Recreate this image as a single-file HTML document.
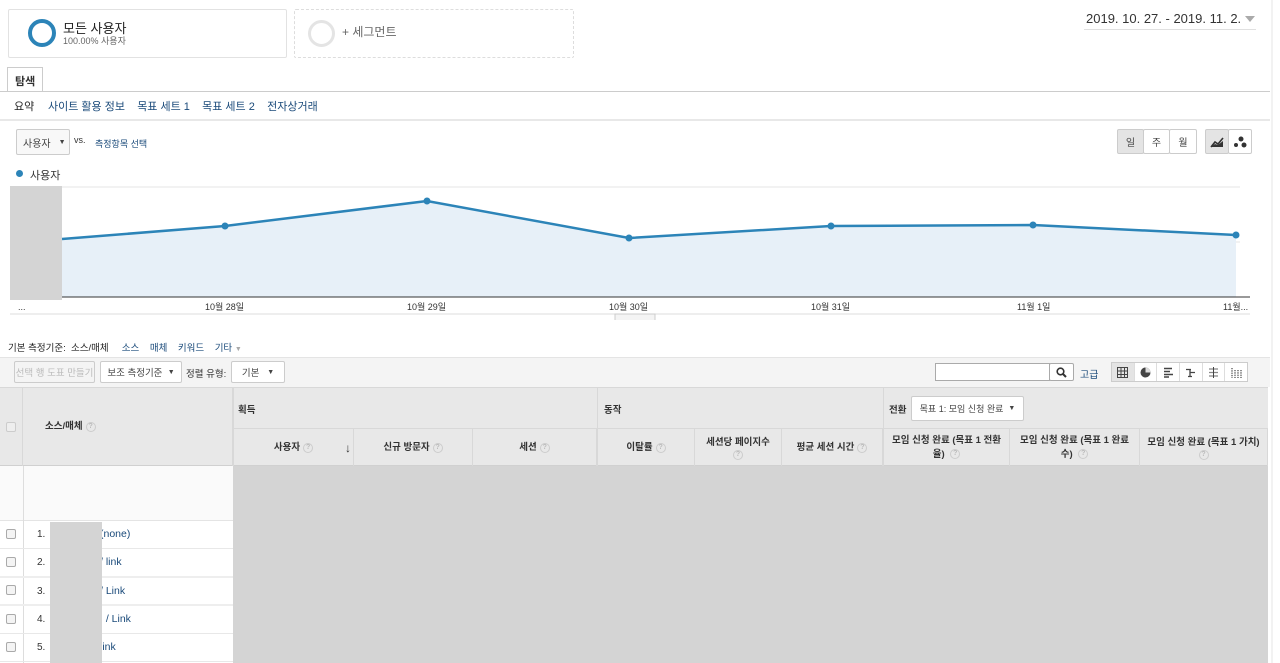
<!DOCTYPE html>
<html><head><meta charset="utf-8"><style>
*{box-sizing:border-box;margin:0;padding:0}
body{width:1280px;height:663px;overflow:hidden;background:#fff;font-family:"Liberation Sans","Noto Sans CJK KR",sans-serif;font-size:11px;color:#333;position:relative}
.a{position:absolute}
a{color:#1a4a7a;text-decoration:none}
.btn{position:absolute;border:1px solid #ccc;border-radius:2px;background:#f8f8f8;font-size:10px;color:#444;display:flex;align-items:center;justify-content:center}
.q{display:inline-block;width:10px;height:10px;border-radius:50%;border:1px solid #ccc;color:#bbb;font-size:7px;line-height:8px;text-align:center;vertical-align:middle;margin-left:3px}
.th{position:absolute;font-size:9.5px;color:#333;display:flex;align-items:center;justify-content:center;text-align:center;border-right:1px solid #d8d8d8;line-height:14px}
.ln{position:absolute;background:#ddd}
.cb{position:absolute;width:10px;height:10px;border:1px solid #aaa;border-radius:2px;background:#f4f4f4}
.ic{border-right:1px solid #ddd;text-align:center;line-height:18px;display:flex;align-items:center;justify-content:center}
</style></head><body>
<div class="a" style="left:8px;top:9px;width:279px;height:49px;border:1px solid #e2e2e2;border-radius:2px"></div>
<div class="a" style="left:28px;top:19px;width:28px;height:28px;border:4px solid #2c84b8;border-radius:50%"></div>
<div class="a" style="left:63px;top:18px;font-size:13px;color:#222">모든 사용자</div>
<div class="a" style="left:63px;top:34px;font-size:9px;color:#666">100.00% 사용자</div>
<div class="a" style="left:294px;top:9px;width:280px;height:49px;border:1px dashed #ddd;border-radius:2px"></div>
<div class="a" style="left:308px;top:20px;width:27px;height:27px;border:3px solid #e4e4e4;border-radius:50%"></div>
<div class="a" style="left:342px;top:23px;font-size:12px;color:#666">+ 세그먼트</div>
<div class="a" style="left:1086px;top:11px;font-size:13px;color:#333">2019. 10. 27. - 2019. 11. 2.</div>
<div class="a" style="left:1245px;top:16px;border:5px solid transparent;border-top:6px solid #aaa"></div>
<div class="a" style="left:1084px;top:29px;width:172px;height:1px;background:#e0e0e0"></div>
<div class="a" style="left:1271px;top:0;width:2px;height:663px;background:#f2f2f2"></div>
<div class="a" style="left:7px;top:67px;width:36px;height:25px;border:1px solid #ccc;border-bottom:none;background:#fff;font-weight:bold;font-size:11px;padding:5px 0 0 7px">탐색</div>
<div class="ln" style="left:0;top:91px;width:1270px;height:1px;background:#ccc"></div>
<div class="a" style="left:14px;top:98px;font-size:11px;color:#222">요약</div>
<div class="a" style="left:48px;top:98px;font-size:11px"><a>사이트 활용 정보</a>&nbsp;&nbsp;&nbsp;&nbsp;<a>목표 세트 1</a>&nbsp;&nbsp;&nbsp;&nbsp;<a>목표 세트 2</a>&nbsp;&nbsp;&nbsp;&nbsp;<a>전자상거래</a></div>
<div class="ln" style="left:0;top:119px;width:1270px;height:2px;background:#e8e8e8"></div>
<div class="btn" style="left:16px;top:129px;width:54px;height:26px;justify-content:flex-start;padding-left:6px">사용자 <span style="margin-left:8px;font-size:7px">▼</span></div>
<div class="a" style="left:74px;top:135px;font-size:9px">vs.</div>
<div class="a" style="left:95px;top:137px;font-size:9px"><a>측정항목 선택</a></div>
<div class="btn" style="left:1117px;top:129px;width:27px;height:25px;background:#e4e4e4">일</div>
<div class="btn" style="left:1143px;top:129px;width:27px;height:25px;background:#fff">주</div>
<div class="btn" style="left:1169px;top:129px;width:28px;height:25px;background:#fff">월</div>
<div class="btn" style="left:1205px;top:129px;width:24px;height:25px;background:#e4e4e4"><svg width="14" height="12"><path d="M1 11 L5 6 L8 8 L13 2" stroke="#333" stroke-width="1.6" fill="none"/><path d="M1 11 L5 8 L8 9 L13 5 V11Z" fill="#333"/></svg></div>
<div class="btn" style="left:1228px;top:129px;width:24px;height:25px;background:#fff"><svg width="14" height="12"><circle cx="8" cy="3" r="2.5" fill="#333"/><circle cx="3" cy="9" r="2" fill="#333"/><circle cx="11" cy="9" r="2.5" fill="#333"/></svg></div>
<div class="a" style="left:16px;top:170px;width:7px;height:7px;border-radius:50%;background:#2c84b8"></div>
<div class="a" style="left:30px;top:167px;font-size:11px;color:#333">사용자</div>
<svg class="a" style="left:0;top:180px" width="1270" height="140">
<line x1="62" y1="7" x2="1240" y2="7" stroke="#e6e6e6"/>
<line x1="62" y1="62" x2="1240" y2="62" stroke="#e6e6e6"/>
<path d="M62 59 L225 46 L427 21 L629 58 L831 46 L1033 45 L1236 55 V117 H62Z" fill="#e7f0f8"/>
<path d="M62 59 L225 46 L427 21 L629 58 L831 46 L1033 45 L1236 55" stroke="#2c84b8" stroke-width="2.5" fill="none"/>
<g fill="#2c84b8"><circle cx="225" cy="46" r="3.5"/><circle cx="427" cy="21" r="3.5"/><circle cx="629" cy="58" r="3.5"/><circle cx="831" cy="46" r="3.5"/><circle cx="1033" cy="45" r="3.5"/><circle cx="1236" cy="55" r="3.5"/></g>
<line x1="10" y1="117" x2="1250" y2="117" stroke="#333"/>
<line x1="10" y1="134" x2="1250" y2="134" stroke="#ddd"/>
<rect x="10" y="6" width="52" height="114" fill="#d4d4d4"/>
<rect x="615" y="134" width="40" height="7" fill="#f4f4f4" stroke="#ccc"/>
</svg>
<div class="a" style="left:18px;top:302px;font-size:9px">...</div>
<div class="a" style="left:205px;top:300px;font-size:9px">10월 28일</div>
<div class="a" style="left:407px;top:300px;font-size:9px">10월 29일</div>
<div class="a" style="left:609px;top:300px;font-size:9px">10월 30일</div>
<div class="a" style="left:811px;top:300px;font-size:9px">10월 31일</div>
<div class="a" style="left:1017px;top:300px;font-size:9px">11월 1일</div>
<div class="a" style="left:1223px;top:300px;font-size:9px">11월...</div>
<div class="a" style="left:8px;top:340px;font-size:9.5px;color:#222">기본 측정기준:&nbsp; 소스/매체 &nbsp;&nbsp;&nbsp;&nbsp;<a>소스</a>&nbsp;&nbsp;&nbsp;&nbsp;<a>매체</a>&nbsp;&nbsp;&nbsp;&nbsp;<a>키워드</a>&nbsp;&nbsp;&nbsp;&nbsp;<a>기타</a> <span style="color:#aaa;font-size:7px">▼</span></div>
<div class="a" style="left:0;top:357px;width:1270px;height:30px;background:#f4f4f4;border-top:1px solid #e4e4e4"></div>
<div class="btn" style="left:14px;top:361px;width:81px;height:22px;color:#bbb;background:#f4f4f4;font-size:9.5px">선택 행 도표 만들기</div>
<div class="btn" style="left:100px;top:361px;width:82px;height:22px;background:#fff;font-size:9.5px">보조 측정기준 &nbsp;<span style="font-size:7px">▼</span></div>
<div class="a" style="left:186px;top:366px;font-size:9.5px">정렬 유형:</div>
<div class="btn" style="left:231px;top:361px;width:54px;height:22px;background:#fff;font-size:9.5px">기본 &nbsp;&nbsp;<span style="font-size:7px">▼</span></div>
<div class="a" style="left:935px;top:363px;width:115px;height:18px;border:1px solid #aaa;background:#fff"></div>
<div class="btn" style="left:1049px;top:363px;width:25px;height:18px;background:#fff;border-color:#aaa"><svg width="11" height="11"><circle cx="4.5" cy="4.5" r="3.3" stroke="#333" stroke-width="1.6" fill="none"/><path d="M7 7 L10 10" stroke="#333" stroke-width="2"/></svg></div>
<div class="a" style="left:1080px;top:366px;font-size:10px"><a>고급</a></div>
<div class="a" style="left:1111px;top:362px;width:137px;height:20px;border:1px solid #ccc;background:#fff;display:flex">
<div class="ic" style="width:23px;background:#e4e4e4"><svg width="11" height="11"><path d="M.5 .5h10v10h-10z M.5 4h10 M.5 7.5h10 M4 .5v10 M7.5 .5v10" stroke="#444" fill="none"/></svg></div>
<div class="ic" style="width:23px"><svg width="11" height="11"><circle cx="5.5" cy="5.5" r="5" fill="#444"/><path d="M5.5 5.5V.5A5 5 0 0 1 10.5 5.5Z" fill="#ddd"/></svg></div>
<div class="ic" style="width:23px"><svg width="11" height="11"><path d="M1 1.5h8M1 4.5h6M1 7.5h9M1 10h5" stroke="#444" stroke-width="1.5"/></svg></div>
<div class="ic" style="width:23px"><svg width="11" height="11"><path d="M1 2.5h5M5 2.5v7M5 5.5h5M3 9.5h4" stroke="#444" stroke-width="1.3"/></svg></div>
<div class="ic" style="width:23px"><svg width="11" height="11"><path d="M1 2h9M1 5.5h9M1 9h9" stroke="#888" stroke-width="1.2"/><path d="M5.5 0v11" stroke="#444"/></svg></div>
<div class="ic" style="width:22px;border:none"><svg width="11" height="11"><path d="M1 1v10M4 3v8M7 3v8M10 3v8" stroke="#444" stroke-width="1.2" stroke-dasharray="1.3 1"/></svg></div>
</div>
<div class="a" style="left:0;top:387px;width:1268px;height:79px;background:#e8e8e8;border-top:1px solid #d8d8d8;border-bottom:1px solid #d0d0d0"></div>
<div class="th" style="left:0;top:387px;width:23px;height:79px"><div class="cb" style="position:static;background:#eee;border-color:#ccc"></div></div>
<div class="th" style="left:23px;top:387px;width:210px;height:79px;justify-content:flex-start;padding-left:22px;font-weight:bold">소스/매체 <span class="q">?</span></div>
<div class="a" style="left:238px;top:402px;font-size:9.5px;font-weight:bold">획득</div>
<div class="a" style="left:604px;top:402px;font-size:9.5px;font-weight:bold">동작</div>
<div class="a" style="left:889px;top:402px;font-size:9.5px;font-weight:bold">전환</div>
<div class="btn" style="left:911px;top:396px;width:113px;height:25px;background:#fff;font-size:9px">목표 1: 모임 신청 완료 &nbsp;<span style="font-size:7px">▼</span></div>
<div class="ln" style="left:233px;top:387px;width:1px;height:79px;background:#d8d8d8"></div>
<div class="ln" style="left:597px;top:387px;width:1px;height:79px;background:#d8d8d8"></div>
<div class="ln" style="left:883px;top:387px;width:1px;height:79px;background:#d8d8d8"></div>
<div class="ln" style="left:233px;top:428px;width:1035px;height:1px;background:#d8d8d8"></div>
<div class="th" style="left:234px;top:429px;width:120px;height:37px;font-weight:bold">사용자 <span class="q">?</span><span style="position:absolute;right:2px;font-size:12px">↓</span></div>
<div class="th" style="left:354px;top:429px;width:119px;height:37px;font-weight:bold">신규 방문자 <span class="q">?</span></div>
<div class="th" style="left:473px;top:429px;width:124px;height:37px;font-weight:bold">세션 <span class="q">?</span></div>
<div class="th" style="left:598px;top:429px;width:97px;height:37px;font-weight:bold">이탈률 <span class="q">?</span></div>
<div class="th" style="left:695px;top:429px;width:87px;height:37px;font-weight:bold;flex-direction:column">세션당 페이지수<span class="q" style="margin:0">?</span></div>
<div class="th" style="left:782px;top:429px;width:101px;height:37px;font-weight:bold">평균 세션 시간 <span class="q">?</span></div>
<div class="th" style="left:884px;top:429px;width:126px;height:37px;font-weight:bold;padding:0 4px"><div>모임 신청 완료 (목표 1 전환율) <span class="q">?</span></div></div>
<div class="th" style="left:1010px;top:429px;width:130px;height:37px;font-weight:bold;padding:0 6px"><div>모임 신청 완료 (목표 1 완료수) <span class="q">?</span></div></div>
<div class="th" style="left:1140px;top:429px;width:128px;height:37px;font-weight:bold;flex-direction:column">모임 신청 완료 (목표 1 가치)<span class="q" style="margin:0">?</span></div>
<div class="a" style="left:0;top:466px;width:233px;height:55px;background:#fafafa;border-bottom:1px solid #e4e4e4"></div>
<div class="ln" style="left:23px;top:466px;width:1px;height:197px;background:#ddd"></div>
<div class="a" style="left:233px;top:466px;width:1035px;height:197px;background:#d4d4d4"></div>
<div class="ln" style="left:0;top:548px;width:233px;height:1px;background:#e8e8e8"></div>
<div class="ln" style="left:0;top:576px;width:233px;height:2px;background:#eee"></div>
<div class="ln" style="left:0;top:604px;width:233px;height:2px;background:#eee"></div>
<div class="ln" style="left:0;top:633px;width:233px;height:1px;background:#e8e8e8"></div>
<div class="ln" style="left:0;top:661px;width:233px;height:1px;background:#e8e8e8"></div>
<div class="cb" style="left:6px;top:529px"></div><div class="cb" style="left:6px;top:557px"></div><div class="cb" style="left:6px;top:585px"></div><div class="cb" style="left:6px;top:614px"></div><div class="cb" style="left:6px;top:642px"></div>
<div class="a" style="left:37px;top:529px;font-size:10px">1.</div>
<div class="a" style="left:37px;top:557px;font-size:10px">2.</div>
<div class="a" style="left:37px;top:586px;font-size:10px">3.</div>
<div class="a" style="left:37px;top:614px;font-size:10px">4.</div>
<div class="a" style="left:37px;top:642px;font-size:10px">5.</div>
<div class="a" style="left:100px;top:528px;font-size:10.5px;color:#1a4a7a">(none)</div>
<div class="a" style="left:100px;top:556px;font-size:10.5px;color:#1a4a7a">/ link</div>
<div class="a" style="left:100px;top:585px;font-size:10.5px;color:#1a4a7a">/ Link</div>
<div class="a" style="left:100px;top:613px;font-size:10.5px;color:#1a4a7a">: / Link</div>
<div class="a" style="left:100px;top:641px;font-size:10.5px;color:#1a4a7a">link</div>
<div class="a" style="left:50px;top:522px;width:52px;height:141px;background:#d4d4d4"></div>
</body></html>
